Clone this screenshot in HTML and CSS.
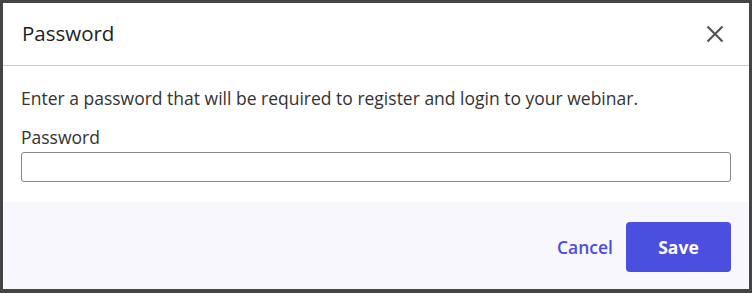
FILE: index.html
```html
<!DOCTYPE html>
<html>
<head>
<meta charset="utf-8">
<link rel="stylesheet" href="styles.css">
</head>
<body>
<div class="modal">
  <div class="modal-header">
    <h2 class="modal-title">Password</h2>
    <button class="close-btn" aria-label="Close">
      <svg width="18" height="18" viewBox="0 0 18 18"><path d="M1.5 1.5 L16.5 16.5 M16.5 1.5 L1.5 16.5" stroke="#555" stroke-width="2.2" fill="none"/></svg>
    </button>
  </div>
  <div class="modal-body">
    <p class="intro">Enter a password that will be required to register and login to your webinar.</p>
    <label class="field-label" for="pw">Password</label>
    <input class="field-input" id="pw" type="text">
  </div>
  <div class="modal-footer">
    <button class="btn-link">Cancel</button>
    <button class="btn-primary">Save</button>
  </div>
</div>
</body>
</html>
```
FILE: styles.css
```css
html, body {
  margin: 0;
  padding: 0;
}
body {
  width: 752px;
  height: 293px;
  background: #444444;
  font-family: "Open Sans", sans-serif;
  box-sizing: border-box;
  padding: 3px 3px 4px 3px;
}
.modal {
  background: #ffffff;
  height: 286px;
  display: flex;
  flex-direction: column;
}
.modal-header {
  height: 63px;
  box-sizing: border-box;
  border-bottom: 1px solid #cccccc;
  display: flex;
  align-items: center;
  justify-content: space-between;
  padding: 0 25px 0 19px;
  flex-shrink: 0;
}
.modal-title {
  margin: 0;
  font-size: 20.5px;
  line-height: 28px;
  font-weight: 500;
  color: #222222;
  padding-bottom: 2px;
}
.close-btn {
  background: none;
  border: 0;
  padding: 0;
  width: 18px;
  height: 18px;
  display: flex;
  cursor: pointer;
}
.modal-body {
  padding: 19px 18px 0 18px;
  display: flex;
  flex-direction: column;
  height: 136px;
  box-sizing: border-box;
  flex-shrink: 0;
}
.intro {
  margin: 0;
  font-size: 17.5px;
  line-height: 26px;
  color: #333333;
}
.field-label {
  margin-top: 13px;
  font-size: 17.5px;
  line-height: 26px;
  color: #333333;
}
.field-input {
  margin-top: 2px;
  height: 30px;
  box-sizing: border-box;
  border: 1px solid #888888;
  border-radius: 3px;
  width: 710px;
  padding: 0 8px;
  font-family: inherit;
  font-size: 16px;
}
.modal-footer {
  flex: 1;
  background: #f8f7fd;
  display: flex;
  align-items: flex-start;
  justify-content: flex-end;
  padding: 20px 18px 0 0;
  gap: 13px;
}
.btn-link {
  background: none;
  border: 0;
  padding: 0;
  height: 50px;
  font-family: inherit;
  font-size: 17.5px;
  font-weight: 600;
  color: #4a4fdc;
  cursor: pointer;
}
.btn-primary {
  width: 105px;
  height: 50px;
  background: #4b4fdf;
  border: 0;
  border-radius: 4px;
  color: #ffffff;
  font-family: inherit;
  font-size: 17.5px;
  font-weight: 700;
  cursor: pointer;
}
```
